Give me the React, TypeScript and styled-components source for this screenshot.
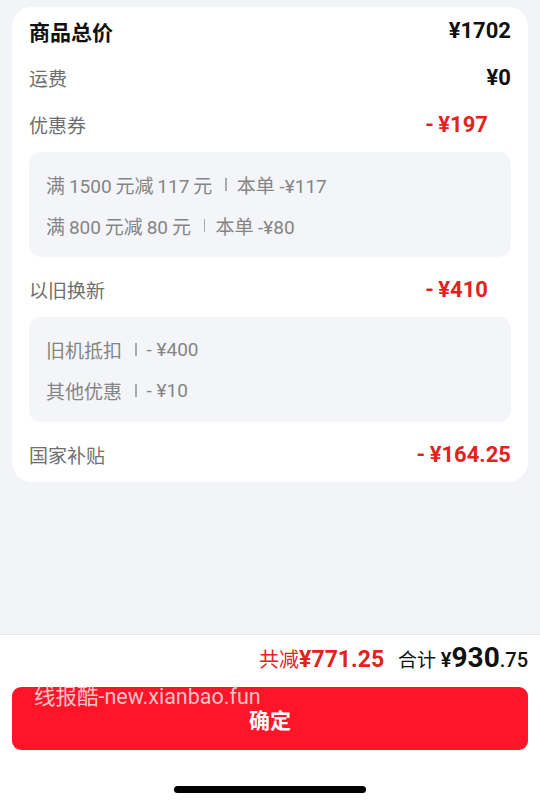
import styled, { createGlobalStyle } from 'styled-components';

const GlobalStyle = createGlobalStyle`
  html, body {
    margin: 0;
    padding: 0;
    background: #f3f4f8;
  }

  body {
    font-family: Roboto, 'Noto Sans CJK SC', sans-serif;
    -webkit-font-smoothing: antialiased;
  }
`;

type Detail = { label: string; value: string };

const couponLines: Detail[] = [
  { label: '满\u20091500\u2009元减\u2009117\u2009元', value: '本单 -¥117' },
  { label: '满\u2009800\u2009元减\u200980\u2009元', value: '本单 -¥80' },
];

const tradeInLines: Detail[] = [
  { label: '旧机抵扣', value: '- ¥400' },
  { label: '其他优惠', value: '- ¥10' },
];

const DetailBox = ({ lines }: { lines: Detail[] }) => (
  <SubBox>
    {lines.map((line) => (
      <SubLine key={line.label}>
        <span>{line.label}</span>
        <Divider />
        <span>{line.value}</span>
      </SubLine>
    ))}
  </SubBox>
);

const App = () => {
  return (
    <Page>
      <GlobalStyle />
      <Content>
        <Card>
          <Row>
            <Title>商品总价</Title>
            <Amount>¥1702</Amount>
          </Row>
          <Row>
            <Label>运费</Label>
            <Amount>¥0</Amount>
          </Row>
          <Row>
            <Label>优惠券</Label>
            <Amount $red $inset>- ¥197</Amount>
          </Row>
          <DetailBox lines={couponLines} />
          <Row $gap>
            <Label>以旧换新</Label>
            <Amount $red $inset>- ¥410</Amount>
          </Row>
          <DetailBox lines={tradeInLines} />
          <Row $gap>
            <Label>国家补贴</Label>
            <Amount $red>- ¥164.25</Amount>
          </Row>
        </Card>
      </Content>

      <Footer>
        <Summary>
          <Saved>
            共减<strong>¥771.25</strong>
          </Saved>
          <Total>
            合计 <Yen>¥</Yen>
            <Big>930</Big>
            <Cents>.75</Cents>
          </Total>
        </Summary>
        <Watermark>线报酷-new.xianbao.fun</Watermark>
        <ConfirmBtn>确定</ConfirmBtn>
        <HomeBar />
      </Footer>
    </Page>
  );
};

export default App;

const Page = styled.div`
  display: flex;
  flex-direction: column;
  min-height: 100vh;
`;

const Content = styled.main`
  flex: 1;
  padding: 7px 12px 0;
`;

const Card = styled.section`
  background: #fff;
  border-radius: 20px;
  padding: 0 17px 4px;
`;

const Row = styled.div<{ $gap?: boolean }>`
  display: flex;
  justify-content: space-between;
  align-items: center;

  height: 47px;
  margin-top: ${({ $gap }) => ($gap ? '9px' : '0')};
`;

const Title = styled.span`
  font-size: 21px;
  font-weight: 700;
  color: #111;
`;

const Label = styled.span`
  font-size: 19px;
  color: #6f6f6f;
`;

const Amount = styled.span<{ $red?: boolean; $inset?: boolean }>`
  font-size: 22px;
  font-weight: 700;
  color: ${({ $red }) => ($red ? '#e3221c' : '#111')};
  padding-right: ${({ $inset }) => ($inset ? '23px' : '0')};
  word-spacing: -1px;
`;

const SubBox = styled.div`
  background: #f4f5f8;
  border-radius: 12px;
  padding: 12px 17px 11px;
  margin-top: 4px;
`;

const SubLine = styled.div`
  display: flex;
  align-items: center;

  height: 41px;
  font-size: 19px;
  color: #858585;
`;

const Divider = styled.i`
  display: inline-block;
  width: 1.5px;
  height: 13px;
  margin: 0 10px 0 13px;
  background: #a9a9a9;
`;

const Footer = styled.footer`
  position: relative;

  display: flex;
  flex-direction: column;
  align-items: stretch;

  height: 169px;
  background: #fff;
  border-top: 1px solid #e6e6e9;
`;

const Summary = styled.div`
  display: flex;
  justify-content: flex-end;
  align-items: baseline;
  gap: 14px;

  padding: 6px 12px 0;
  height: 34px;
`;

const Saved = styled.span`
  font-size: 20px;
  color: #e3221c;

  strong {
    font-size: 23px;
    font-weight: 700;
  }
`;

const Total = styled.span`
  font-size: 19px;
  color: #111;
`;

const Yen = styled.span`
  font-weight: 600;
  font-size: 20px;
`;

const Big = styled.span`
  font-size: 28px;
  font-weight: 700;
`;

const Cents = styled.span`
  font-size: 20px;
  font-weight: 500;
`;

const Watermark = styled.span`
  position: absolute;
  left: 34px;
  top: 44px;
  z-index: 2;

  font-size: 21.5px;
  color: rgba(236, 236, 236, 0.82);
  pointer-events: none;
`;

const ConfirmBtn = styled.button`
  height: 63px;
  margin: 12px 12px 0;
  border: none;
  border-radius: 9px;

  background: #ff1428;
  color: #fff;
  font-family: inherit;
  font-size: 21px;
  font-weight: 700;
`;

const HomeBar = styled.div`
  align-self: center;

  width: 192px;
  height: 7px;
  margin-top: 36px;
  border-radius: 4px;
  background: #000;
`;
